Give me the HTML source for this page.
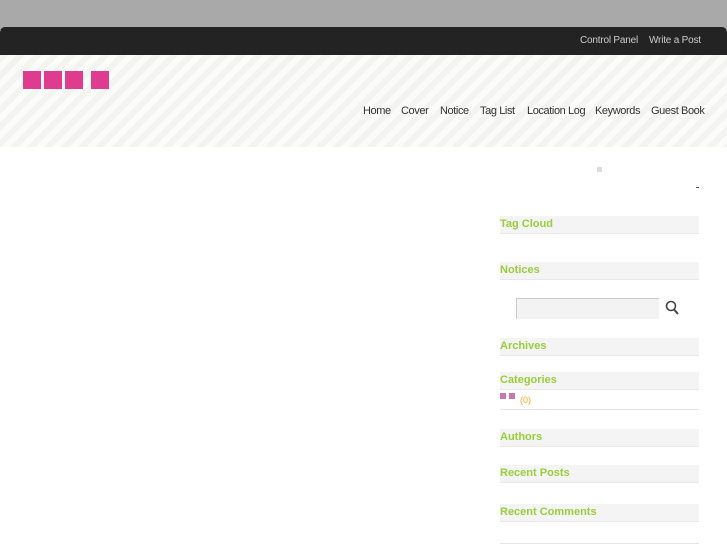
<!DOCTYPE html>
<html><head><style>
body{margin:0;width:727px;height:545px;overflow:hidden;background:#fff;font-family:"Liberation Sans",sans-serif;position:relative}
.top{position:absolute;left:0;top:0;width:727px;height:30px;background:#a9a9a9}
.bar{position:absolute;left:0;top:27px;width:727px;height:28px;background:#232323;border-radius:5px 5px 0 0}
.bar span{position:absolute;top:8px;font-size:10px;color:#ccc;letter-spacing:-0.2px}
.head{position:absolute;left:0;top:55px;width:727px;height:92px;background:repeating-linear-gradient(135deg,#f3f3ef 0 6px,#fbfbf9 6px 12px)}
.sq{position:absolute;top:71px;width:18px;height:18px;background:#e03c8f}
.nav{position:absolute;top:105px;font-size:11px;color:#333;letter-spacing:-0.4px}
.h{position:absolute;left:500px;width:199px;height:17px;background:#f4f4f4;border-bottom:1px solid #e8e8e8;font-size:11px;font-weight:bold;color:#9acd3a;line-height:16px}
</style></head><body>
<div class="top"></div>
<div class="bar"><span style="left:580px">Control Panel</span><span style="left:649px">Write a Post</span></div>
<div class="head"></div>
<div class="sq" style="left:23px"></div><div class="sq" style="left:44px"></div><div class="sq" style="left:65px"></div><div class="sq" style="left:91px"></div>
<span class="nav" style="left:363px">Home</span><span class="nav" style="left:401px">Cover</span><span class="nav" style="left:440px">Notice</span><span class="nav" style="left:480px">Tag List</span><span class="nav" style="left:527px">Location Log</span><span class="nav" style="left:595px">Keywords</span><span class="nav" style="left:651px">Guest Book</span>
<div style="position:absolute;left:597px;top:167px;width:5px;height:5px;background:#ddd"></div>
<div style="position:absolute;left:696px;top:187px;width:3px;height:1px;background:#555"></div>
<div class="h" style="top:216px">Tag Cloud</div>
<div class="h" style="top:262px">Notices</div>
<div style="position:absolute;left:516px;top:298px;width:142px;height:20px;background:#f3f3f3;border-top:1px solid #ccc;border-left:1px solid #ccc"></div>
<svg style="position:absolute;left:665px;top:300px" width="15" height="16"><circle cx="6" cy="6" r="4.5" fill="none" stroke="#444" stroke-width="1.6"/><line x1="9" y1="9.5" x2="13" y2="14" stroke="#444" stroke-width="2"/></svg>
<div class="h" style="top:338px">Archives</div>
<div class="h" style="top:372px">Categories</div>
<div style="position:absolute;left:500px;top:393px;width:6px;height:6px;background:#c975b1"></div>
<div style="position:absolute;left:509px;top:393px;width:6px;height:6px;background:#c975b1"></div>
<span style="position:absolute;left:520px;top:395px;font-size:9px;color:#f5a623">(0)</span>
<div style="position:absolute;left:500px;top:409px;width:199px;height:1px;background:#e5e5e5"></div>
<div class="h" style="top:429px">Authors</div>
<div class="h" style="top:465px">Recent Posts</div>
<div class="h" style="top:504px">Recent Comments</div>
<div style="position:absolute;left:500px;top:543px;width:199px;height:1px;background:#e5e5e5"></div>
</body></html>
